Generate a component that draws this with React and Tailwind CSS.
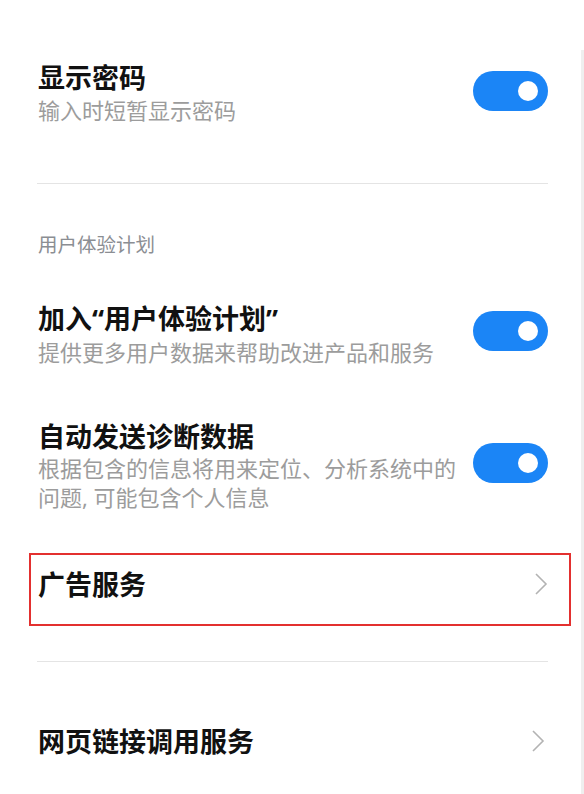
import React from "react";

const font = { fontFamily: '"Noto Sans CJK SC", "Noto Sans", sans-serif' };
const mixed = { fontFamily: '"Noto Sans", "Noto Sans CJK SC", sans-serif' };

function Toggle({ className = "" }) {
  return (
    <div className={"w-[75px] h-[40px] rounded-full bg-[#1b85f6] flex items-center justify-end pr-[10px] shrink-0 " + className}>
      <div className="w-[20px] h-[20px] rounded-full bg-white" />
    </div>
  );
}

function Chevron() {
  return (
    <svg width="14" height="22" viewBox="0 0 14 22" className="shrink-0">
      <polyline points="2,1 12,11 2,21" fill="none" stroke="#b3b3b3" strokeWidth="1.6" />
    </svg>
  );
}

function ToggleRow({ title, sub, toggleClass = "", titleStyle, subStyle }) {
  return (
    <div className="flex items-center justify-between">
      <div className="flex flex-col">
        <div className="text-[27px] leading-[36px] font-bold text-[#111]" style={titleStyle}>{title}</div>
        <div className="text-[22px] leading-[29px] text-[#9c9c9c] max-w-[420px]" style={subStyle}>{sub}</div>
      </div>
      <Toggle className={toggleClass} />
    </div>
  );
}

export default function App() {
  return (
    <div className="w-[584px] h-[794px] bg-white overflow-hidden flex" style={font}>
      <div className="w-[581px] flex flex-col">
        <div className="pl-[38px] pr-[33px] pt-[59px]">
          <ToggleRow title="显示密码" sub="输入时短暂显示密码" toggleClass="mb-[2px]" />
        </div>
        <div className="ml-[37px] mr-[33px] mt-[59px] h-px bg-[#e4e4e4]" />
        <div className="pl-[38px] mt-[47px] text-[19.5px] leading-[26px] text-[#8b8e93]">用户体验计划</div>
        <div className="pl-[38px] pr-[33px] mt-[44px]">
          <ToggleRow
            title="加入“用户体验计划”"
            titleStyle={mixed}
            sub="提供更多用户数据来帮助改进产品和服务"
            toggleClass="mb-[6px]"
          />
        </div>
        <div className="pl-[38px] pr-[33px] mt-[52px]">
          <ToggleRow
            title="自动发送诊断数据"
            sub="根据包含的信息将用来定位、分析系统中的问题, 可能包含个人信息"
            subStyle={mixed}
            toggleClass="mb-[4px]"
          />
        </div>
        <div className="ml-[29px] w-[542px] mt-[41px] h-[73px] border-2 border-[#e3302f] flex items-start justify-between pl-[7px] pr-[21px] pt-[11px]">
          <div className="text-[27px] leading-[36px] font-bold text-[#111]">广告服务</div>
          <div className="h-[36px] flex items-center"><Chevron /></div>
        </div>
        <div className="ml-[37px] mr-[33px] mt-[35px] h-px bg-[#e4e4e4]" />
        <div className="pl-[38px] pr-[36px] mt-[61px] flex items-center justify-between">
          <div className="text-[27px] leading-[36px] font-bold text-[#111]">网页链接调用服务</div>
          <Chevron />
        </div>
      </div>
      <div className="w-[3px] mt-[50px] bg-[#efefef]" />
    </div>
  );
}
